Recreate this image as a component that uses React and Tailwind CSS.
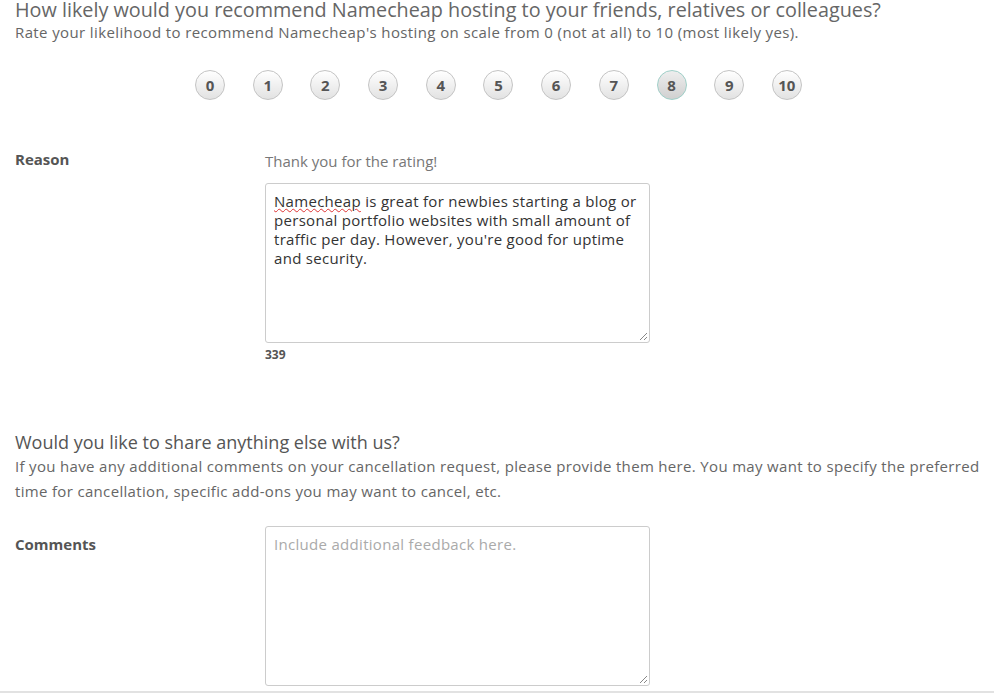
import React from "react";

const nums = [0, 1, 2, 3, 4, 5, 6, 7, 8, 9, 10];

function Grip() {
  return (
    <svg className="absolute right-[1px] bottom-[1px]" width="10" height="10" viewBox="0 0 10 10">
      <line x1="9" y1="2" x2="2" y2="9" stroke="#888" strokeWidth="1" />
      <line x1="9" y1="6" x2="6" y2="9" stroke="#888" strokeWidth="1" />
    </svg>
  );
}

export default function App() {
  return (
    <div className="w-[994px] h-[693px] bg-white overflow-hidden relative text-[#555]" style={{ fontFamily: "'Open Sans', Lato, sans-serif" }}>
      <div className="pl-[15px]">
        <h1 className="text-[19.8px] leading-[20px] text-[#666] font-normal whitespace-nowrap">How likely would you recommend Namecheap hosting to your friends, relatives or colleagues?</h1>
        <p className="text-[15px] leading-[18px] text-[#666] tracking-[0.38px] mt-[3px] whitespace-nowrap">Rate your likelihood to recommend Namecheap's hosting on scale from 0 (not at all) to 10 (most likely yes).</p>
      </div>
      <div className="flex gap-[27.7px] pl-[195px] mt-[29px]">
        {nums.map((n) => (
          <div
            key={n}
            className={
              n === 8
                ? "w-[30px] h-[30px] rounded-full border border-[#9fcfc8] bg-gradient-to-b from-[#eeeeee] to-[#d0d0d0] flex items-center justify-center text-[15px] font-bold text-[#555]"
                : "w-[30px] h-[30px] rounded-full border border-[#c4c4c4] bg-gradient-to-b from-white to-[#e2e2e2] flex items-center justify-center text-[15px] font-bold text-[#555]"
            }
          >
            {n}
          </div>
        ))}
      </div>
      <div className="flex mt-[44px]">
        <div className="w-[265px] shrink-0 pl-[15px] text-[15px] font-bold leading-[18px] text-[#555] pt-[6px]">Reason</div>
        <div className="w-[385px]">
          <div className="text-[15px] leading-[18px] text-[#777] pt-[8px]">Thank you for the rating!</div>
          <div className="mt-[13px] h-[160px] w-[385px] border border-[#ccc] rounded-[3px] px-[8px] pt-[8px] text-[15px] leading-[19px] tracking-[0.3px] text-[#333] relative">
            <span className="underline decoration-wavy decoration-[#d33] decoration-1 underline-offset-1">Namecheap</span> is great for newbies starting a blog or personal portfolio websites with small amount of traffic per day. However, you're good for uptime and security.
            <Grip />
          </div>
          <div className="text-[12px] font-bold text-[#555] mt-[4px] leading-[16px]">339</div>
        </div>
      </div>
      <div className="pl-[15px] mt-[68px]">
        <h2 className="text-[18px] leading-[22px] text-[#555] font-normal">Would you like to share anything else with us?</h2>
        <p className="text-[15px] leading-[25px] text-[#666] tracking-[0.33px] mt-[1px] pr-[10px]">If you have any additional comments on your cancellation request, please provide them here. You may want to specify the preferred time for cancellation, specific add-ons you may want to cancel, etc.</p>
      </div>
      <div className="flex mt-[22px]">
        <div className="w-[265px] shrink-0 pl-[15px] text-[15px] font-bold leading-[18px] text-[#555] pt-[9px]">Comments</div>
        <div className="h-[160px] w-[385px] border border-[#ccc] rounded-[3px] px-[8px] pt-[8px] text-[15px] leading-[19px] tracking-[0.3px] text-[#aaa] relative">
          Include additional feedback here.
          <Grip />
        </div>
      </div>
      <div className="absolute left-0 right-0 bottom-0 h-[2px] bg-[#e2e2e2]" />
    </div>
  );
}
